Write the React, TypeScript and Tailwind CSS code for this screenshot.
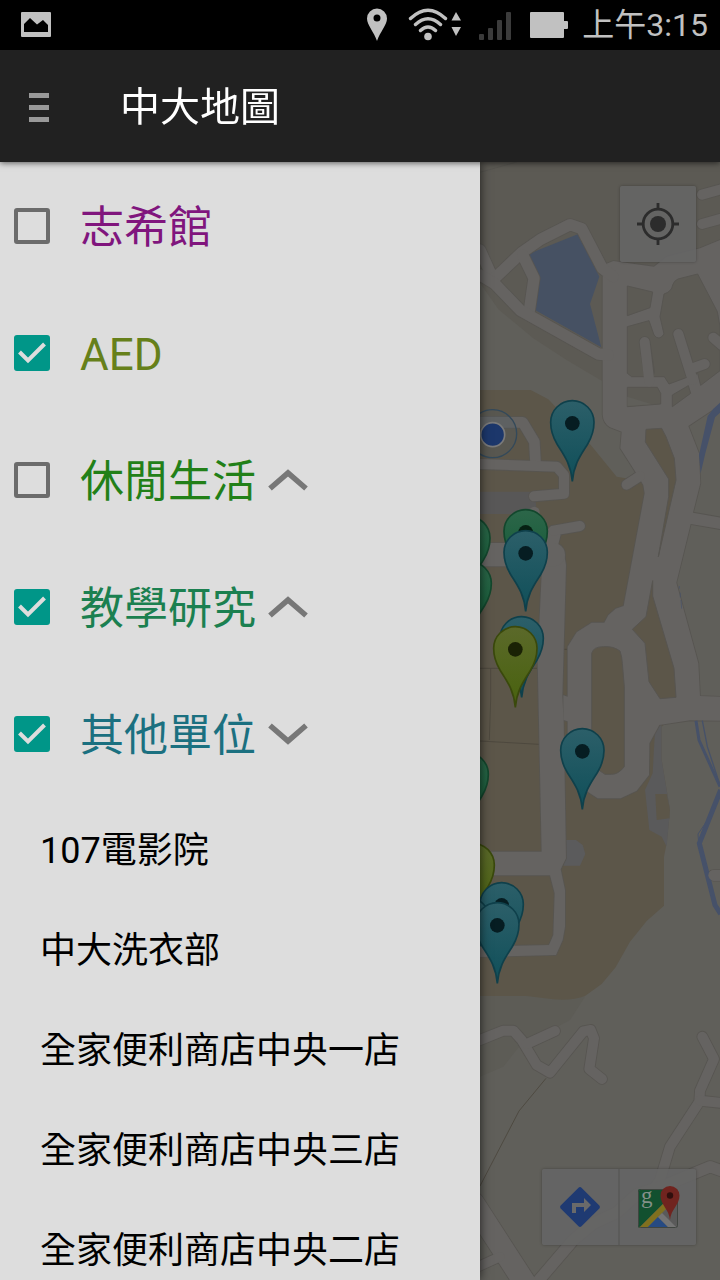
import { useState } from "react";

type Tone = "teal" | "green" | "lime";

const categories = [
  { id: "zhixi", name: "志希館", color: "text-[#80157d]", checked: false, arrow: null },
  { id: "aed", name: "AED", color: "text-[#66801a]", checked: true, arrow: null },
  { id: "leisure", name: "休閒生活", color: "text-[#228018]", checked: false, arrow: "up" },
  { id: "research", name: "教學研究", color: "text-[#1b8050]", checked: true, arrow: "up" },
  { id: "others", name: "其他單位", color: "text-[#1b7080]", checked: true, arrow: "down" },
];

const places = ["107電影院", "中大洗衣部", "全家便利商店中央一店", "全家便利商店中央三店", "全家便利商店中央二店"];

const pins: { x: number; y: number; tone: Tone }[] = [
  { x: 307, y: 790, tone: "teal" },
  { x: 167, y: 1117, tone: "green" },
  { x: -5, y: 1137, tone: "green" },
  { x: 167, y: 1180, tone: "teal" },
  { x: -1, y: 1273, tone: "green" },
  { x: 155, y: 1438, tone: "teal" },
  { x: 136, y: 1468, tone: "lime" },
  { x: 337, y: 1774, tone: "teal" },
  { x: -10, y: 1846, tone: "green" },
  { x: 8, y: 2118, tone: "lime" },
  { x: 95, y: 2236, tone: "teal" },
  { x: -7, y: 2280, tone: "teal" },
  { x: 82, y: 2296, tone: "teal" },
];

const toneStroke: Record<Tone, string> = { teal: "#0f404b", green: "#13472d", lime: "#3a490c" };

const roads: { d: string; w: number }[] = [
  { d: "M30 270L66 350", w: 34 },
  { d: "M66 362L155 278L212 238L300 194L335 206L397 325L430 350", w: 34 },
  { d: "M158 285L192 355L178 452", w: 34 },
  { d: "M30 345L75 372L152 452L385 582L415 585", w: 34 },
  { d: "M760 86L696 104", w: 30 },
  { d: "M760 174L696 192", w: 30 },
  { d: "M20 787H158L193 845L197 915", w: 32 },
  { d: "M20 912L260 920L282 945V1001L192 1009", w: 30 },
  { d: "M20 1184H250", w: 70 },
  { d: "M250 1112L330 1098", w: 30 },
  { d: "M510 948L470 974", w: 30 },
  { d: "M20 2644L100 2612H130L155 2640L200 2715L240 2738L340 2614L362 2610L372 2635L358 2727L396 2757", w: 30 },
  { d: "M170 2652L255 2613", w: 30 },
  { d: "M697 2630L732 2697L690 2792L688 2825L600 2960L570 3060L535 3110", w: 30 },
  { d: "M690 2822L765 2830", w: 30 },
  { d: "M760 3034L720 3020L600 3070L500 3104L440 3158L370 3190L310 3240L190 3380", w: 34 },
  { d: "M10 3130L175 3385", w: 66 },
  { d: "M20 3322L90 3290", w: 28 },
  { d: "M760 2146H731", w: 32 },
];

const blocks = [
  "M472 378L548 396L540 443L472 467Z",
  "M472 500L537 482L552 525Q567 545 582 522L570 470L582 402Q605 395 608 375Q612 362 624 357L683 342L742 455L750 500V632L692 676L683 640L597 672L583 650H485L472 640Z",
  "M472 682H562L572 700V732L472 740Z",
  "M607 705L655 677L662 700L607 740Z",
];

const campusBlocks = [
  "M528 808L575 805L588 830L613 895L618 960L565 1190L596 1010V957L526 846Z",
  "M548 1262V1308L612 1525L618 1612L570 1616L537 1565L525 1450L487 1408L528 1370Z",
  "M365 1480Q370 1460 400 1460Q430 1458 450 1473Q456 1490 457 1510L463 1580V1820Q445 1843 425 1843H405L383 1828L365 1780Z",
];

function CampusMap() {
  const roadNetwork =
    "M398 350L408 312L430 303L552 320L590 290L690 265L760 236V728L655 798L687 880L691 970L669 1058L760 1074V1109L662 1092L619 1268L685 1510L690 1608L760 1611V1682L660 1681L568 1695L538 1750L537 1845L500 1892L452 1915H383L345 1890L293 1780V1684L280 1680V1606L293 1610V1460L320 1417L365 1388H403L415 1366L437 1346L461 1338L524 1000L520 975L497 937L451 865L455 815L420 802Q400 790 398 765Z";
  const westRoad =
    "M245 1097L272 1124L263 1160L282 1180L288 1215L277 1608L281 1684L288 2095L272 2128L285 2190V2300L278 2340L258 2385L20 2391V2360L237 2355L250 2325L254 2200L240 2146H20V2075H215L203 1500L217 1200L232 1110Z";
  return (
    <svg viewBox="30 6 720 3354" preserveAspectRatio="xMinYMin slice" className="absolute inset-0 size-full" role="img" aria-label="中大地圖">
      <defs>
        <linearGradient id="teal" x1="0" y1="0" x2="0" y2="1">
          <stop offset="0" stopColor="#2c5f69" />
          <stop offset="1" stopColor="#0f4f59" />
        </linearGradient>
        <linearGradient id="green" x1="0" y1="0" x2="0" y2="1">
          <stop offset="0" stopColor="#2c6649" />
          <stop offset="1" stopColor="#0d5731" />
        </linearGradient>
        <linearGradient id="lime" x1="0" y1="0" x2="0" y2="1">
          <stop offset="0" stopColor="#5b692a" />
          <stop offset="1" stopColor="#48620d" />
        </linearGradient>
      </defs>
      <rect x="30" y="6" width="720" height="3354" fill="#605f5a" />
      <path d="M30 6H750V730H560L400 665L290 600L190 535L85 448L30 370Z" fill="#5c5a54" />
      <path d="M30 2507H250L345 2510L300 2580L145 2663L100 2720L30 2750Z" fill="#5d5c56" />
      <path d="M30 37L140 6" stroke="#55534e" strokeWidth="2" />
      <path
        d="M30 690H182L235 718L350 840L440 950L500 960L520 800H580L640 950L600 1260L560 1300L640 1520V1640L575 1700V1800L600 1950L590 2050L582 2090V2237L530 2283L480 2345L437 2422L395 2472L345 2508Q310 2522 250 2518L170 2508H30Z"
        fill="#5c5649"
      />
      <path d="M175 282L325 222L388 350L360 432L394 562L195 450L210 355Z" fill="#465163" />
      <path d="M30 995H195L200 1062H30Z" fill="#585757" />
      <circle cx="193" cy="1056" r="16" fill="#656361" />
      <path d="M288 2040H318L338 2055L346 2082L330 2117H280Z" fill="#5b5b5c" />
      <path d="M555 1710L575 1690V1800L600 1950L590 2060L575 2030L538 2010L525 1890L548 1840Z" fill="#5a5a5b" />
      <path d="M556 1902H590L600 1950L598 1975L560 1980Z" fill="#5c5649" />
      <g fill="none" stroke="#4a463c" strokeWidth="2.5">
        <path d="M30 1525H203M62 1525V1620L58 1740M30 1743L100 1747L207 1753M281 1468H293" />
        <path d="M228 2755L147 2853L30 3078" />
      </g>
      <g fill="none" stroke="#575551" strokeLinecap="round" strokeLinejoin="round">
        {roads.map((r) => (
          <path key={r.d} d={r.d} strokeWidth={r.w + 5} />
        ))}
        <path d={roadNetwork} strokeWidth="5" />
        <path d={westRoad} strokeWidth="5" />
      </g>
      <path d={roadNetwork} fill="#656361" />
      <path d={westRoad} fill="#656361" />
      <g stroke="#575551" strokeWidth="3">
        {blocks.map((d) => (
          <path key={d} d={d} fill="#5c5a54" />
        ))}
        {campusBlocks.map((d) => (
          <path key={d} d={d} fill="#5c5649" />
        ))}
      </g>
      <path d="M472 710L545 733L472 738Z" fill="#605f5a" />
      <g fill="none" stroke="#656361" strokeLinecap="round" strokeLinejoin="round">
        {roads.map((r) => (
          <path key={r.d} d={r.d} strokeWidth={r.w} />
        ))}
      </g>
      <g fill="none" strokeLinecap="round">
        <g stroke="#575551" strokeWidth="35">
          <path d="M524 546L537 635M625 522L662 640M672 624L704 612M730 533L755 555" />
        </g>
        <g stroke="#656361" strokeWidth="30">
          <path d="M524 546L538 665M625 522L668 660M662 627L704 612M730 533L755 555" />
        </g>
      </g>
      <path d="M750 728L730 746L713 768L687 885L692 940L706 880L735 772L750 758Z" fill="#465169" />
      <g fill="none" stroke="#465169">
        <path d="M678 1682L687 1740L750 1880" strokeWidth="9" />
        <path d="M697 1682L712 1760L750 1875" strokeWidth="4" />
        <path d="M752 1890L688 2050L735 2235L752 2262" strokeWidth="15" />
        <path d="M728 1958L684 2022L686 2050" strokeWidth="3" />
        <path d="M628 1278V1286M631 1298V1312M633 1320L635 1346" strokeWidth="2" />
      </g>
      <path d="M760 2146H731" stroke="#656361" strokeWidth="32" strokeLinecap="round" />
      <circle cx="68" cy="821" r="72" fill="#4d5b68" fillOpacity="0.25" stroke="#33495a" strokeWidth="4" />
      <circle cx="68" cy="824" r="36" fill="#1c376b" stroke="#7a7a7a" strokeWidth="5" />
      {pins.map((p) => (
        <g key={`${p.x}-${p.y}`} transform={`translate(${p.x} ${p.y})`}>
          <path
            d="M0 174C-5 120-26 94-46 62C-58 42-65 20-65-3A65 65 0 1 1 65-3C65 20 58 42 46 62C26 94 5 120 0 174Z"
            fill={`url(#${p.tone})`}
            stroke={toneStroke[p.tone]}
            strokeWidth="5"
          />
          <circle r="22" fill={p.tone === "lime" ? "#1a2205" : p.tone === "green" ? "#062012" : "#061d22"} />
        </g>
      ))}
    </svg>
  );
}

function StatusBar() {
  return (
    <div className="flex h-[50px] shrink-0 items-center bg-black pr-3 pl-[21px] text-[#c1c1c1]">
      <svg width="30" height="26" viewBox="0 0 30 26" aria-hidden="true">
        <rect width="30" height="25" rx="1" fill="currentColor" />
        <path d="M3 12L9 6L16 12.500L22 8L27 13V20H3Z" fill="#000" />
      </svg>
      <svg className="ml-auto" width="22" height="34" viewBox="0 0 22 34" aria-hidden="true">
        <path fillRule="evenodd" fill="currentColor" d="M11 33C8 24 1 17 1 10.500a10 10 0 0 1 20 0C21 17 14 24 11 33ZM11 6.500a3.500 3.500 0 1 0 0 7a3.500 3.500 0 0 0 0-7Z" />
      </svg>
      <svg className="ml-5" width="54" height="34" viewBox="0 0 54 34" fill="none" stroke="currentColor" aria-hidden="true">
        <g strokeWidth="3.400" strokeLinecap="round">
          <path d="M2.500 10.500Q20-6 37.500 10.500M7.500 16.500Q20 5 32.500 16.500M12.500 22.500Q20 15.500 27.500 22.500" />
        </g>
        <circle cx="20" cy="28.500" r="3.800" fill="currentColor" stroke="none" />
        <path d="M43.500 12.500L48 4L53 12.500ZM43.500 19H53L48 28Z" fill="currentColor" stroke="none" />
      </svg>
      <svg className="ml-4" width="34" height="30" viewBox="0 0 34 30" fill="#3b3b3b" aria-hidden="true">
        <rect x="1" y="24" width="5" height="6" rx="1" />
        <rect x="10" y="18" width="5" height="12" rx="1" />
        <rect x="19" y="10" width="5" height="20" rx="1" />
        <rect x="28" y="2" width="5" height="28" rx="1" />
      </svg>
      <svg className="ml-[18px]" width="38" height="26" viewBox="0 0 38 26" fill="currentColor" aria-hidden="true">
        <path d="M0 1Q0 0 1 0H33Q34 0 34 1V9H37Q38 9 38 10V16Q38 17 37 17H34V25Q34 26 33 26H1Q0 26 0 25Z" />
      </svg>
      <span className="ml-[14px] text-[32px] leading-8">上午3:15</span>
    </div>
  );
}

function Chevron({ open }: { open: boolean }) {
  return (
    <svg width="40" height="22" viewBox="0 0 40 22" fill="none" stroke="#777" strokeWidth="5.500" aria-hidden="true">
      <path d={open ? "M2 2.500L20 18L38 2.500" : "M2 19.500L20 4L38 19.500"} />
    </svg>
  );
}

export default function App() {
  const [checked, setChecked] = useState<Record<string, boolean>>(
    Object.fromEntries(categories.map((c) => [c.id, c.checked])),
  );
  return (
    <div className="flex h-screen flex-col overflow-hidden bg-[#dddddd] font-[Roboto,'Noto_Sans_CJK_TC',sans-serif]">
      <StatusBar />
      <header className="relative z-10 flex h-28 shrink-0 items-center bg-[#212121] pt-0.5 pl-[29px] shadow-[0_1px_6px_rgba(0,0,0,0.6)]">
        <button aria-label="選單" className="flex w-5 flex-col gap-[7px]">
          <span className="h-[5px] bg-[#999]" />
          <span className="h-[5px] bg-[#999]" />
          <span className="h-[5px] bg-[#999]" />
        </button>
        <h1 className="ml-[71px] pt-0.5 text-[40px] leading-[48px] text-white">中大地圖</h1>
      </header>
      <div className="flex min-h-0 flex-1">
        <nav className="relative z-[1] w-2/3 overflow-y-auto bg-[#dddddd] shadow-[0_0_10px_rgba(0,0,0,0.7)] [scrollbar-width:none]">
          {categories.map((c) => (
            <div key={c.id} className="flex h-[127px] items-center gap-3 pl-[14px]">
              <label className="flex items-center gap-[30px]">
                <span className="grid size-9 place-items-center">
                  <input
                    type="checkbox"
                    checked={checked[c.id]}
                    onChange={(e) => setChecked({ ...checked, [c.id]: e.target.checked })}
                    className="peer col-start-1 row-start-1 size-9 appearance-none rounded-[3px] border-4 border-[#6b6b6b] checked:border-[#009688] checked:bg-[#009688]"
                  />
                  <svg
                    viewBox="0 0 36 36"
                    fill="none"
                    stroke="#dddddd"
                    strokeWidth="4"
                    className="pointer-events-none invisible col-start-1 row-start-1 size-9 peer-checked:visible"
                    aria-hidden="true"
                  >
                    <path d="M5.500 17L14 25.500L30.500 9" />
                  </svg>
                </span>
                <span className={`pt-1 text-[44px] leading-[52px] ${c.color}`}>{c.name}</span>
              </label>
              {c.arrow && (
                <button aria-label={`展開${c.name}`}>
                  <Chevron open={c.arrow === "down"} />
                </button>
              )}
            </div>
          ))}
          <ul className="pt-1">
            {places.map((p) => (
              <li key={p} className="flex h-[100px] items-center pl-10 text-4xl leading-[44px] text-black">
                {p}
              </li>
            ))}
          </ul>
        </nav>
        <main className="relative flex-1 overflow-hidden bg-[#605f5a]">
          <CampusMap />
          <button
            aria-label="我的位置"
            className="absolute top-6 right-6 grid size-[76px] place-items-center rounded-xs bg-[#656565]/90 shadow-[0_0_3px_rgba(0,0,0,0.3)]"
          >
            <svg width="42" height="42" viewBox="0 0 42 42" fill="none" stroke="#2c2c2c" strokeWidth="2.800" aria-hidden="true">
              <circle cx="21" cy="21" r="14.800" />
              <circle cx="21" cy="21" r="8" fill="#2c2c2c" stroke="none" />
              <path d="M21 0V6M21 36V42M0 21H6M36 21H42" />
            </svg>
          </button>
          <div className="absolute right-6 bottom-[35px] flex h-[76px] w-[154px] divide-x-2 divide-[#5b5b5a] rounded-xs bg-[#656565]/90 shadow-[0_0_3px_rgba(0,0,0,0.3)]">
            <button aria-label="路線" className="grid flex-1 place-items-center">
              <svg width="40" height="40" viewBox="0 0 40 40" aria-hidden="true">
                <path d="M18.500 0.700Q20-0.700 21.500 0.700L39.300 18.500Q40.500 20 39.300 21.500L21.500 39.300Q20 40.700 18.500 39.300L0.700 21.500Q-0.500 20 0.700 18.500Z" fill="#1f3a72" />
                <path d="M12 26V16H24V11L31 18L24 25V20H16V26Z" fill="#6a6a6a" />
              </svg>
            </button>
            <button aria-label="Google 地圖" className="grid flex-1 place-items-center">
              <svg width="42" height="42" viewBox="-1 0 42 42" aria-hidden="true" className="overflow-visible">
                <clipPath id="tile">
                  <rect y="3" width="40" height="39" rx="2" />
                </clipPath>
                <g clipPath="url(#tile)">
                  <rect y="3" width="40" height="39" fill="#5a5a5a" />
                  <path d="M0 3H40L0 43Z" fill="#12502f" />
                  <path d="M1 42L27 16L31 20L9 42Z" fill="#80701f" />
                  <path d="M9 42L20 31L31 42Z" fill="#264a82" />
                  <path d="M20 31L24 27L39 42H31Z" fill="#747474" />
                  <rect x="0.500" y="3.500" width="39" height="38" rx="2" fill="none" stroke="#404540" />
                </g>
                <text x="3" y="17" fontSize="23" fill="#84918a" className="font-['Liberation_Serif',serif]">g</text>
                <path d="M32 34C31 23 22.500 19 22.500 9.500a9.500 9.500 0 0 1 19 0C41.500 19 33 23 32 34Z" fill="#70241f" />
                <circle cx="32" cy="9.500" r="3.200" fill="#2f0f0d" />
              </svg>
            </button>
          </div>
        </main>
      </div>
    </div>
  );
}
